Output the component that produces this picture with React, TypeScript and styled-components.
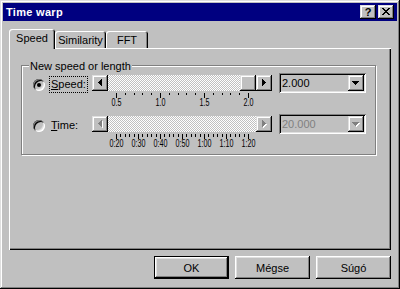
import styled, { createGlobalStyle, css } from "styled-components";

const GlobalStyle = createGlobalStyle`
  html, body {
    margin: 0;
    padding: 0;
    background: #c0c0c0;
  }
  body {
    font-family: "Liberation Sans", Arial, sans-serif;
    font-size: 11px;
    color: #000;
  }
`;

const raised = css`
  box-shadow: inset -1px -1px #000, inset 1px 1px #dfdfdf, inset -2px -2px #808080,
    inset 2px 2px #fff;
`;

const buttonRaised = css`
  box-shadow: inset -1px -1px #000, inset 1px 1px #fff, inset -2px -2px #808080,
    inset 2px 2px #dfdfdf;
`;

const sunken = css`
  box-shadow: inset 1px 1px #808080, inset -1px -1px #fff, inset 2px 2px #000,
    inset -2px -2px #dfdfdf;
`;

const Window = styled.div`
  box-sizing: border-box;
  width: 400px;
  height: 289px;
  padding: 3px;
  background: #c0c0c0;
  ${raised};
  display: flex;
  flex-direction: column;
`;

const TitleBar = styled.div`
  flex: none;
  height: 18px;
  background: #000080;
  display: flex;
  align-items: center;
  justify-content: space-between;
  padding: 0 3px 0 3px;
`;

const TitleText = styled.span`
  color: #fff;
  font-weight: bold;
  font-size: 11px;
  letter-spacing: 0.3px;
  line-height: 18px;
`;

const TitleButtons = styled.div`
  display: flex;
  gap: 2px;
`;

const TitleButton = styled.div`
  box-sizing: border-box;
  width: 16px;
  height: 14px;
  background: #c0c0c0;
  ${raised};
  display: flex;
  align-items: center;
  justify-content: center;
  font-weight: bold;
  font-size: 11px;
  line-height: 14px;
  padding-bottom: 1px;
`;

const Body = styled.div`
  flex: 1;
  display: flex;
  flex-direction: column;
  padding: 8px 6px 7px 6px;
`;

const TabStrip = styled.div`
  flex: none;
  height: 19px;
  display: flex;
  align-items: flex-end;
`;

const Tab = styled.div<{ $active?: boolean; $width: number }>`
  position: relative;
  z-index: ${({ $active }) => ($active ? 1 : 0)};
  box-sizing: border-box;
  width: ${({ $width }) => $width}px;
  height: ${({ $active }) => ($active ? 20 : 17)}px;
  margin-bottom: ${({ $active }) => ($active ? -1 : 0)}px;
  padding-bottom: ${({ $active }) => ($active ? 3 : 0)}px;
  background: #c0c0c0;
  border-radius: 3px 3px 0 0;
  box-shadow: inset 1px 1px #fff, inset -1px 0 #000, inset -2px 0 #808080;
  display: flex;
  align-items: center;
  justify-content: center;
`;

const Panel = styled.div`
  box-sizing: border-box;
  flex: none;
  height: 202px;
  background: #c0c0c0;
  box-shadow: inset 1px 1px #fff, inset -1px -1px #000, inset -2px -2px #808080;
  display: flex;
  flex-direction: column;
  align-items: flex-start;
`;

const Group = styled.div`
  box-sizing: border-box;
  width: 355px;
  margin: 17px 0 0 12px;
  border: 1px solid #808080;
  box-shadow: 1px 1px 0 #fff, inset 1px 1px 0 #fff;
  display: flex;
  flex-direction: column;
  align-items: flex-start;
  padding-bottom: 4px;
`;

const Legend = styled.span`
  margin: -6px 0 0 7px;
  padding: 0 1px;
  line-height: 13px;
  background: #c0c0c0;
`;

const Options = styled.div`
  display: flex;
  flex-direction: column;
  gap: 5px;
  padding-left: 11px;
`;

const Option = styled.div`
  display: grid;
  grid-template-columns: 12px 47px 180px 94px;
  grid-template-rows: 20px 16px;
  align-items: center;
`;

const Radio = styled.span<{ $checked?: boolean }>`
  width: 12px;
  height: 12px;
  margin-top: 3px;
  border-radius: 50%;
  background: #c0c0c0;
  ${sunken};
  display: flex;
  align-items: center;
  justify-content: center;

  &::after {
    content: "";
    width: 4px;
    height: 4px;
    border-radius: 50%;
    background: #000;
    display: ${({ $checked }) => ($checked ? "block" : "none")};
  }
`;

const Label = styled.span<{ $focused?: boolean }>`
  justify-self: start;
  align-self: start;
  margin: 3px 0 0 4px;
  padding: 0 1px;
  line-height: 15px;
  border: 1px ${({ $focused }) => ($focused ? "dotted #000" : "solid transparent")};
`;

const Slider = styled.div`
  display: flex;
  height: 16px;
`;

const ScrollButton = styled.div`
  box-sizing: border-box;
  flex: none;
  width: 16px;
  height: 16px;
  background: #c0c0c0;
  ${raised};
`;

const Track = styled.div`
  flex: 1;
  display: flex;
  justify-content: flex-end;
  background: repeating-conic-gradient(#fff 0 25%, #c0c0c0 0 50%) 0 0 / 2px 2px;
`;

const Combo = styled.div<{ $disabled?: boolean }>`
  box-sizing: border-box;
  width: 87px;
  height: 20px;
  margin-left: 7px;
  padding: 2px;
  background: #c0c0c0;
  ${sunken};
  display: flex;
  align-items: center;
  color: ${({ $disabled }) => ($disabled ? "#808080" : "#000")};
`;

const ComboText = styled.span`
  flex: 1;
  padding-left: 1px;
  line-height: 16px;
`;

const ScaleSvg = styled.svg`
  grid-column: 3;
  grid-row: 2;
  display: block;
  align-self: start;
  font-family: "Liberation Sans", Arial, sans-serif;
  font-size: 10px;
`;

const ButtonRow = styled.div`
  flex: none;
  margin-top: 6px;
  display: flex;
  justify-content: flex-end;
  gap: 6px;
`;

const PushButton = styled.div<{ $default?: boolean }>`
  box-sizing: border-box;
  width: 75px;
  height: 23px;
  background: #c0c0c0;
  display: flex;
  align-items: center;
  justify-content: center;
  ${({ $default }) =>
    $default
      ? css`
          border: 1px solid #000;
          ${buttonRaised};
        `
      : buttonRaised};
`;

type Dir = "left" | "right" | "down";

const arrowRects = (dir: Dir): [number, number, number, number][] => {
  const r: [number, number, number, number][] = [];
  for (let i = 0; i < 4; i++) {
    if (dir === "left") r.push([6 + i, 7 - i, 1, 1 + 2 * i]);
    if (dir === "right") r.push([9 - i, 7 - i, 1, 1 + 2 * i]);
    if (dir === "down") r.push([7 - i, 9 - i, 1 + 2 * i, 1]);
  }
  return r;
};

const Arrow = ({ dir, disabled }: { dir: Dir; disabled?: boolean }) => (
  <svg width="16" height="16" shapeRendering="crispEdges">
    {disabled &&
      arrowRects(dir).map(([x, y, w, h], i) => (
        <rect key={`s${i}`} x={x + 1} y={y + 1} width={w} height={h} fill="#fff" />
      ))}
    {arrowRects(dir).map(([x, y, w, h], i) => (
      <rect key={i} x={x} y={y} width={w} height={h} fill={disabled ? "#808080" : "#000"} />
    ))}
  </svg>
);

const CloseGlyph = () => {
  const rows = [
    [0, 1, 6, 7],
    [1, 2, 5, 6],
    [2, 3, 4, 5],
    [3, 4],
    [2, 3, 4, 5],
    [1, 2, 5, 6],
    [0, 1, 6, 7],
  ];
  return (
    <svg width="8" height="7" shapeRendering="crispEdges">
      {rows.flatMap((cols, y) =>
        cols.map((x) => <rect key={`${x}-${y}`} x={x} y={y} width={1} height={1} fill="#000" />)
      )}
    </svg>
  );
};

// tick marks and labels under a slider; labels are squeezed to the narrow bitmap width
const Scale = ({
  labels,
  minorH,
  labelWidth,
}: {
  labels: string[];
  minorH: number;
  labelWidth: number;
}) => {
  const span = 132;
  const start = 24;
  const per = 5;
  const total = (labels.length - 1) * per;
  const ticks = [];
  for (let i = 0; i <= total; i++) {
    const x = Math.round(start + (span * i) / total);
    const major = i % per === 0;
    ticks.push(<rect key={i} x={x} y={0} width={1} height={major ? 5 : minorH} fill="#000" />);
  }
  return (
    <ScaleSvg width="180" height="16">
      <g shapeRendering="crispEdges">{ticks}</g>
      {labels.map((l, i) => {
        const cx = start + (span * i) / (labels.length - 1) + 0.5;
        return (
          <text
            key={l}
            x={cx - labelWidth / 2}
            y={13}
            textLength={labelWidth}
            lengthAdjust="spacingAndGlyphs"
            fill="#000"
          >
            {l}
          </text>
        );
      })}
    </ScaleSvg>
  );
};

const SliderRow = ({ disabled }: { disabled?: boolean }) => (
  <Slider>
    <ScrollButton>
      <Arrow dir="left" disabled={disabled} />
    </ScrollButton>
    <Track>{!disabled && <ScrollButton />}</Track>
    <ScrollButton>
      <Arrow dir="right" disabled={disabled} />
    </ScrollButton>
  </Slider>
);

const ComboBox = ({ value, disabled }: { value: string; disabled?: boolean }) => (
  <Combo $disabled={disabled}>
    <ComboText>{value}</ComboText>
    <ScrollButton>
      <Arrow dir="down" disabled={disabled} />
    </ScrollButton>
  </Combo>
);

const App = () => {
  return (
    <>
      <GlobalStyle />
      <Window>
        <TitleBar>
          <TitleText>Time warp</TitleText>
          <TitleButtons>
            <TitleButton>?</TitleButton>
            <TitleButton>
              <CloseGlyph />
            </TitleButton>
          </TitleButtons>
        </TitleBar>
        <Body>
          <TabStrip>
            <Tab $active $width={46}>
              Speed
            </Tab>
            <Tab $width={51}>Similarity</Tab>
            <Tab $width={42}>FFT</Tab>
          </TabStrip>
          <Panel>
            <Group>
              <Legend>New speed or length</Legend>
              <Options>
                <Option>
                  <Radio $checked />
                  <Label $focused>
                    <u>S</u>peed:
                  </Label>
                  <SliderRow />
                  <ComboBox value="2.000" />
                  <Scale labels={["0.5", "1.0", "1.5", "2.0"]} minorH={2} labelWidth={10} />
                </Option>
                <Option>
                  <Radio />
                  <Label>
                    <u>T</u>ime:
                  </Label>
                  <SliderRow disabled />
                  <ComboBox value="20.000" disabled />
                  <Scale
                    labels={["0:20", "0:30", "0:40", "0:50", "1:00", "1:10", "1:20"]}
                    minorH={3}
                    labelWidth={14}
                  />
                </Option>
              </Options>
            </Group>
          </Panel>
          <ButtonRow>
            <PushButton $default>OK</PushButton>
            <PushButton>Mégse</PushButton>
            <PushButton>Súgó</PushButton>
          </ButtonRow>
        </Body>
      </Window>
    </>
  );
};

export default App;
